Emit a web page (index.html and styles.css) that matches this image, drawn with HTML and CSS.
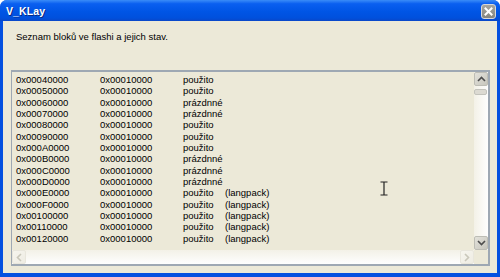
FILE: index.html
```html
<!DOCTYPE html>
<html lang="cs">
<head>
  <meta charset="UTF-8">
  <title>V_KLay</title>
  <link rel="stylesheet" href="styles.css">
</head>
<body>
  <div class="window">
    <div class="titlebar">
      <span class="title">V_KLay</span>
      <span class="close-btn">
        <svg width="13" height="13" viewBox="0 0 13 13">
          <path d="M3.5 3.5 L9.5 9.5 M9.5 3.5 L3.5 9.5" stroke="#fff" stroke-width="2" stroke-linecap="square"/>
        </svg>
      </span>
    </div>
    <div class="client">
      <p class="label">Seznam bloků ve flashi a jejich stav.</p>
      <div class="listbox">
        <div class="list" id="list"></div>
        <div class="vscroll">
          <span class="sbtn up">
            <svg width="9" height="6" viewBox="0 0 9 6"><path d="M1 5 L4.5 1.5 L8 5" fill="none" stroke="#4d4d4d" stroke-width="1.6"/></svg>
          </span>
          <span class="vtrack"><span class="thumb"></span></span>
          <span class="sbtn down">
            <svg width="9" height="6" viewBox="0 0 9 6"><path d="M1 1 L4.5 4.5 L8 1" fill="none" stroke="#4d4d4d" stroke-width="1.6"/></svg>
          </span>
        </div>
        <div class="hscroll">
          <span class="sbtn faint">
            <svg width="6" height="9" viewBox="0 0 6 9"><path d="M5 1 L1.5 4.5 L5 8" fill="none" stroke="#c9c7ba" stroke-width="1.6"/></svg>
          </span>
          <span class="htrack"></span>
          <span class="sbtn faint">
            <svg width="6" height="9" viewBox="0 0 6 9"><path d="M1 1 L4.5 4.5 L1 8" fill="none" stroke="#c9c7ba" stroke-width="1.6"/></svg>
          </span>
        </div>
        <div class="corner"></div>
      </div>
    </div>
    <svg class="ibeam" width="8" height="15" viewBox="0 0 8 15">
      <path d="M0.5 1 H7.5 M0.5 14 H7.5 M4 1 V14" fill="none" stroke="#222" stroke-width="1.2"/>
    </svg>
  </div>

  <script>
    const blocks = [
      ["0x00040000", "0x00010000", "použito", ""],
      ["0x00050000", "0x00010000", "použito", ""],
      ["0x00060000", "0x00010000", "prázdnné", ""],
      ["0x00070000", "0x00010000", "prázdnné", ""],
      ["0x00080000", "0x00010000", "použito", ""],
      ["0x00090000", "0x00010000", "použito", ""],
      ["0x000A0000", "0x00010000", "použito", ""],
      ["0x000B0000", "0x00010000", "prázdnné", ""],
      ["0x000C0000", "0x00010000", "prázdnné", ""],
      ["0x000D0000", "0x00010000", "prázdnné", ""],
      ["0x000E0000", "0x00010000", "použito", "(langpack)"],
      ["0x000F0000", "0x00010000", "použito", "(langpack)"],
      ["0x00100000", "0x00010000", "použito", "(langpack)"],
      ["0x00110000", "0x00010000", "použito", "(langpack)"],
      ["0x00120000", "0x00010000", "použito", "(langpack)"]
    ];

    const list = document.getElementById('list');
    blocks.forEach((b) => {
      const row = document.createElement('div');
      row.className = 'row';
      b.forEach((cell, i) => {
        const span = document.createElement('span');
        span.className = 'c' + i;
        span.textContent = cell;
        row.appendChild(span);
      });
      list.appendChild(row);
    });
  </script>
</body>
</html>
```

FILE: styles.css
```css
body {
  margin: 0;
  font-family: 'Liberation Sans', Arial, sans-serif;
  background-color: #ffffff;
}
.window {
  position: relative;
  width: 500px;
  height: 277px;
  display: flex;
  flex-direction: column;
  background: #0550e0;
  border-radius: 7px 7px 0 0;
  overflow: hidden;
}
.titlebar {
  height: 21px;
  flex-shrink: 0;
  display: flex;
  align-items: center;
  justify-content: space-between;
  padding: 0 4px 0 6px;
  background: linear-gradient(to bottom, #3a8cf8 0%, #0a5ff0 18%, #0055e5 55%, #0050dd 85%, #0a47c8 100%);
}
.title {
  color: #fff;
  font-weight: bold;
  font-size: 10.5px;
  text-shadow: 1px 1px 0 #0a2a80;
  letter-spacing: 0.1px;
}
.close-btn {
  width: 13px;
  height: 13px;
  margin-top: 1px;
  border: 1px solid #d8d8d8;
  border-radius: 3px;
  background: linear-gradient(to bottom, #a5a5a0, #86867f);
  display: flex;
  align-items: center;
  justify-content: center;
  box-sizing: content-box;
}
.close-btn svg {
  display: block;
}
.client {
  flex: 1;
  margin: 0 3px 4px 3px;
  background: #ece9d8;
  display: flex;
  flex-direction: column;
  padding: 0 7px 7px 8px;
}
.label {
  margin: 10px 0 0 5px;
  font-size: 9.5px;
  color: #000;
  height: 39px;
}
.listbox {
  flex: 1;
  border: 1px solid #9ea8b3;
  border-width: 2px 2px 2px 1px;
  display: grid;
  grid-template-columns: 1fr 14px;
  grid-template-rows: 1fr 14px;
  background: #ece9d8;
}
.list {
  padding: 2px 0 0 4px;
  overflow: hidden;
}
.row {
  display: flex;
  font-size: 9.5px;
  line-height: 11.33px;
  color: #000;
  white-space: nowrap;
}
.c0 {
  width: 84px;
}
.c1 {
  width: 83px;
}
.c2 {
  width: 42px;
}
.vscroll {
  display: flex;
  flex-direction: column;
  background: linear-gradient(to right, #f3f1e7, #fefefe);
}
.hscroll {
  display: flex;
  background: linear-gradient(to bottom, #f3f1e7, #fefefe);
}
.vtrack,
.htrack {
  flex: 1;
  position: relative;
}
.thumb {
  position: absolute;
  top: 3px;
  left: 0;
  width: 13px;
  height: 6px;
  border: 1px solid #c3c3bc;
  border-radius: 2px;
  background: #dcdad2;
  box-sizing: border-box;
}
.sbtn {
  width: 14px;
  height: 14px;
  flex-shrink: 0;
  display: flex;
  align-items: center;
  justify-content: center;
  box-sizing: border-box;
  border: 1px solid #bdbdb5;
  border-radius: 2px;
  background: linear-gradient(to bottom right, #e3e2db, #c7c6bd);
}
.sbtn.faint {
  border-color: #e8e6dc;
  background: linear-gradient(to bottom right, #f6f5ee, #eeece3);
}
.sbtn svg {
  display: block;
}
.corner {
  background: #ece9d8;
}
.ibeam {
  position: absolute;
  left: 380px;
  top: 181px;
}
```
